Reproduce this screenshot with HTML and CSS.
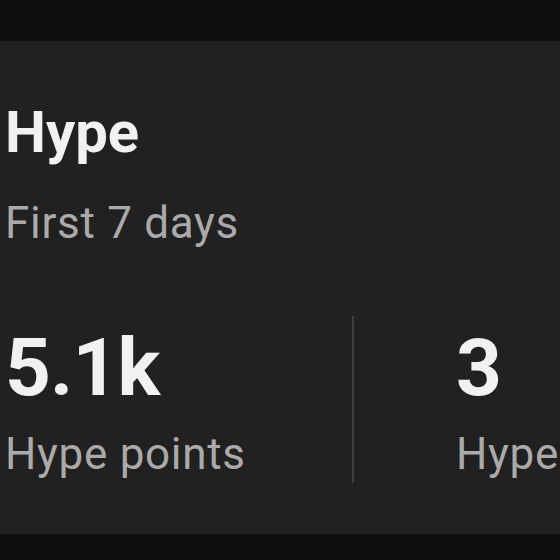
FILE: index.html
```html
<!DOCTYPE html>
<html lang="en">
<head>
<meta charset="utf-8">
<link rel="stylesheet" href="styles.css">
</head>
<body>
<section class="card">
  <h2 class="title">Hype</h2>
  <p class="subtitle">First 7 days</p>
  <div class="stats">
    <div class="stat">
      <div class="value">5.1k</div>
      <div class="label">Hype points</div>
    </div>
    <div class="divider"></div>
    <div class="stat stat-second">
      <div class="value">3</div>
      <div class="label">Hypes</div>
    </div>
  </div>
</section>
</body>
</html>
```
FILE: styles.css
```css
html, body {
  margin: 0;
  padding: 0;
  background: #0f0f0f;
  overflow: hidden;
}
body {
  width: 560px;
  height: 560px;
  font-family: Roboto, "Liberation Sans", sans-serif;
  padding-top: 41px;
  box-sizing: border-box;
}
.card {
  background: #212121;
  width: 700px;
  box-sizing: border-box;
  padding: 57px 0 51px 5px;
}
.title {
  margin: 0;
  font-size: 58px;
  line-height: 68px;
  font-weight: 700;
  color: #f1f1f1;
}
.subtitle {
  margin: 31px 0 0;
  font-size: 44px;
  line-height: 52px;
  color: #aaaaaa;
  letter-spacing: 0.7px;
}
.stats {
  margin-top: 67px;
  display: flex;
  align-items: stretch;
}
.stat {
  padding: 6px 0 3px;
  white-space: nowrap;
}
.stat:first-child {
  width: 347px;
}
.stat-second {
  padding-left: 102px;
}
.divider {
  width: 2px;
  background: #3f3f3f;
}
.value {
  font-size: 80px;
  line-height: 92px;
  font-weight: 700;
  color: #f1f1f1;
  letter-spacing: -0.8px;
}
.label {
  margin-top: 14px;
  font-size: 44px;
  line-height: 52px;
  color: #aaaaaa;
  letter-spacing: 0.7px;
}
```
